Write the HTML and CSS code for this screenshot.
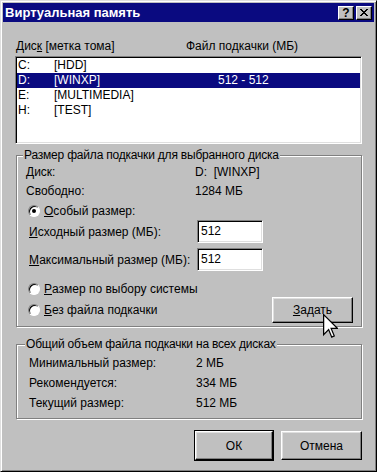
FILE: index.html
```html
<!DOCTYPE html>
<html>
  <head>
    <meta name="viewport" content="width=device-width, initial-scale=1" />
    <title>Виртуальная память</title>
    <link rel="stylesheet" href="styles.css">
  </head>

  <body>
    <div class="window">
      <div class="titlebar">
        <span class="title">Виртуальная память</span>
        <span class="tbtn">?</span>
        <span class="tbtn close">
          <svg width="8" height="7" viewBox="0 0 8 7"><path d="M0 0h2v1h1v1h2v-1h1v-1h2v1h-1v1h-1v1h-1v1h1v1h1v1h1v1h-2v-1h-1v-1h-2v1h-1v1h-2v-1h1v-1h1v-1h1v-1h-1v-1h-1v-1h-1z" fill="#000"/></svg>
        </span>
      </div>

      <div class="content">
        <div class="list-head">
          <span class="col-drive">Дис<u>к</u> [метка тома]</span>
          <span>Файл подкачки (МБ)</span>
        </div>
        <div class="listbox">
          <div class="row"><span class="c1">C:</span><span class="c2">[HDD]</span><span></span></div>
          <div class="row selected"><span class="c1">D:</span><span class="c2">[WINXP]</span><span>512 - 512</span></div>
          <div class="row"><span class="c1">E:</span><span class="c2">[MULTIMEDIA]</span><span></span></div>
          <div class="row"><span class="c1">H:</span><span class="c2">[TEST]</span><span></span></div>
        </div>

        <fieldset class="group group-drive">
          <legend>Размер файла подкачки для выбранного диска</legend>
          <div class="info"><span class="label">Диск:</span><span>D:&nbsp; [WINXP]</span></div>
          <div class="info"><span class="label">Свободно:</span><span>1284 МБ</span></div>
          <div class="option"><span class="radio checked"></span><u>О</u>собый размер:</div>
          <div class="field"><span class="label"><u>И</u>сходный размер (МБ):</span><span class="input">512</span></div>
          <div class="field second"><span class="label"><u>М</u>аксимальный размер (МБ):</span><span class="input">512</span></div>
          <div class="option spaced"><span class="radio"></span><u>Р</u>азмер по выбору системы</div>
          <div class="option">
            <span class="radio"></span><u>Б</u>ез файла подкачки
            <span class="button set"><u>З</u>адать</span>
          </div>
        </fieldset>

        <fieldset class="group group-total">
          <legend>Общий объем файла подкачки на всех дисках</legend>
          <div class="total"><span class="label">Минимальный размер:</span><span>2 МБ</span></div>
          <div class="total"><span class="label">Рекомендуется:</span><span>334 МБ</span></div>
          <div class="total"><span class="label">Текущий размер:</span><span>512 МБ</span></div>
        </fieldset>

        <div class="actions">
          <span class="button default">ОК</span>
          <span class="button cancel">Отмена</span>
        </div>
      </div>

      <!-- mouse pointer over the Задать button -->
      <svg class="cursor" width="15" height="25" viewBox="0 0 12 20">
        <path d="M0.5 0.5 L0.5 16.5 L4.5 12.5 L7 18.5 L9 17.5 L6.5 11.5 L11.5 11.5 Z" fill="#fff" stroke="#000" stroke-width="1"/>
      </svg>
    </div>
  </body>
</html>
```

FILE: styles.css
```css
* {
  box-sizing: border-box;
}

body {
  margin: 0;
  font-family: "Liberation Sans", Arial, sans-serif;
  font-size: 12px;
  color: #000;
}

.window {
  position: relative;
  width: 377px;
  height: 472px;
  padding: 2px;
  background-color: #c0c0c0;
  border: 1px solid;
  border-color: #dfdfdf #000 #000 #dfdfdf;
  box-shadow: inset 1px 1px #fff, inset -1px -1px #808080;
}

/* Title bar */
.titlebar {
  display: flex;
  align-items: center;
  height: 19px;
  padding: 0 2px;
  background-color: #0a0a80;
}

.title {
  flex: 1;
  color: #fff;
  font-weight: bold;
  font-size: 13px;
}

.tbtn {
  display: flex;
  align-items: center;
  justify-content: center;
  width: 16px;
  height: 14px;
  background-color: #c0c0c0;
  border: 1px solid;
  border-color: #fff #000 #000 #fff;
  box-shadow: inset -1px -1px #808080;
  font-weight: bold;
  font-size: 12px;
  line-height: 12px;
}

.close {
  margin-left: 2px;
}

/* Dialog body */
.content {
  padding: 17px 12px 0 12px;
}

.list-head {
  display: flex;
  height: 14px;
  line-height: 14px;
  padding-left: 1px;
}

.col-drive {
  width: 170px;
}

.listbox {
  height: 88px;
  margin-top: 3px;
  padding: 1px 1px 0 1px;
  background-color: #fff;
  border: 1px solid;
  border-color: #808080 #fff #fff #808080;
  box-shadow: inset 1px 1px #000, inset -1px -1px #dfdfdf;
}

.row {
  display: flex;
  height: 15px;
  line-height: 15px;
  padding-left: 1px;
}

.row.selected {
  background-color: #0a0a80;
  color: #fff;
}

.c1 {
  width: 36px;
}

.c2 {
  width: 164px;
}

/* Group boxes */
.group {
  margin: 4px 0 0 1px;
  padding: 1px 0 6px 9px;
  border: 1px solid #808080;
  box-shadow: inset 1px 1px #fff, 1px 1px #fff;
  min-width: 0;
}

.group legend {
  margin-left: -3px;
  padding: 0 1px;
  line-height: 14px;
  letter-spacing: -0.2px;
  background-color: #c0c0c0;
}

.info {
  display: flex;
  height: 19px;
  line-height: 19px;
}

.info .label {
  width: 169px;
}

.option {
  display: flex;
  align-items: center;
  height: 19px;
  padding-left: 2px;
}

.option.spaced {
  height: 21px;
  margin-top: 7px;
}

.option:last-child {
  height: 21px;
}

.radio {
  position: relative;
  width: 12px;
  height: 12px;
  margin-right: 4px;
  border-radius: 50%;
  background-color: #fff;
  border: 1px solid;
  border-color: #808080 #fff #fff #808080;
  box-shadow: inset 1px 1px #000;
}

.radio.checked:after {
  content: "";
  position: absolute;
  top: 3px;
  left: 3px;
  width: 4px;
  height: 4px;
  border-radius: 50%;
  background: #000;
}

.field {
  display: flex;
  align-items: center;
  height: 23px;
  padding-left: 3px;
}

.field.second {
  margin-top: 5px;
}

.field .label {
  width: 168px;
}

.input {
  width: 66px;
  height: 23px;
  padding-left: 3px;
  line-height: 21px;
  background-color: #fff;
  border: 1px solid;
  border-color: #808080 #fff #fff #808080;
  box-shadow: inset 1px 1px #000, inset -1px -1px #dfdfdf;
}

.button {
  display: flex;
  align-items: center;
  justify-content: center;
  width: 81px;
  height: 26px;
  background-color: #c0c0c0;
  border: 1px solid;
  border-color: #fff #000 #000 #fff;
  box-shadow: inset -1px -1px #808080, inset 1px 1px #dfdfdf;
}

.button.set {
  margin-left: auto;
  margin-right: 8px;
}

.group-total {
  margin-top: 10px;
  padding: 2px 0 5px 12px;
}

.group-total legend {
  margin-left: -4px;
}

.total {
  display: flex;
  height: 20px;
  line-height: 20px;
}

.total .label {
  width: 167px;
}

/* OK / Cancel */
.actions {
  display: flex;
  justify-content: flex-end;
  gap: 8px;
  margin-top: 12px;
}

.actions .button {
  width: 78px;
  height: 29px;
}

.actions .cancel {
  width: 81px;
}

.button.default {
  outline: 1px solid #000;
}

.cursor {
  position: absolute;
  left: 322px;
  top: 313px;
}
```
